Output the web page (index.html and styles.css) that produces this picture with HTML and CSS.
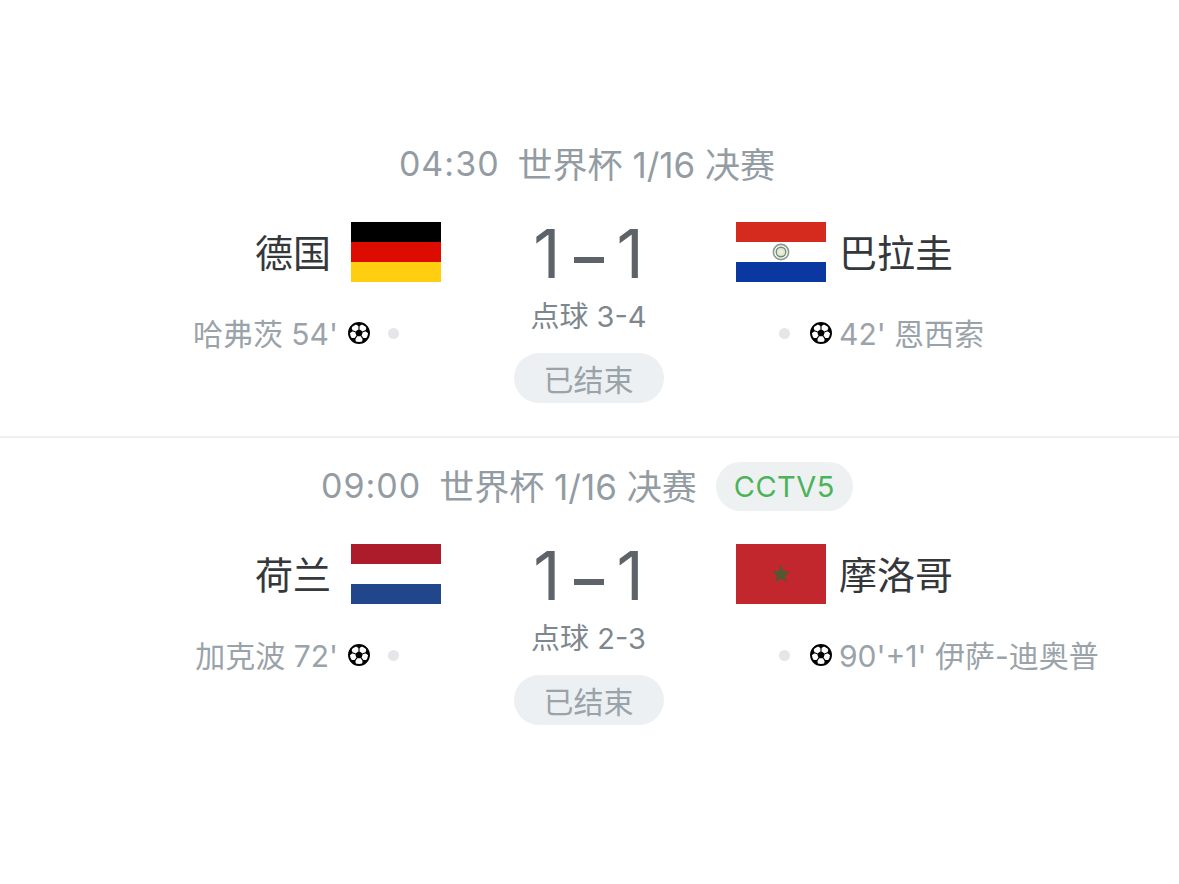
FILE: index.html
```html
<!DOCTYPE html>
<html lang="zh-CN">
<head>
<meta charset="utf-8">
<title>世界杯 1/16 决赛</title>
<link rel="stylesheet" href="styles.css">
</head>
<body>
<svg class="defs" width="0" height="0" aria-hidden="true">
  <symbol id="ball" viewBox="0 0 22 22">
    <circle cx="11" cy="11" r="10" fill="#fff" stroke="#000" stroke-width="1.9"/>
    <path d="M11 6.9 14.9 9.73 13.41 14.32H8.59L7.1 9.73Z" fill="#000"/>
    <path d="M11 7V4M14.8 9.8 17.66 8.84M13.3 14.2 15.11 16.66M8.7 14.2 6.89 16.66M7.2 9.8 4.34 8.84" stroke="#000" stroke-width="1.1" fill="none"/>
    <path d="M11 4.6 6.6 1.27H15.4Z M17.1 9 19.3 3.9 21.6 12.2Z M14.7 16.1 20.1 16.1 14 21.2Z M7.3 16.1 8 21.2 1.9 16.1Z M4.9 9 .4 12.2 2.7 3.9Z" fill="#000"/>
  </symbol>
</svg>
<main class="list">
  <section class="match match-first">
    <header class="meta">
      <span class="time">04:30</span>
      <span class="league">世界杯 1/16 决赛</span>
    </header>
    <div class="board">
      <div class="side side-home">
        <div class="team">
          <span class="name">德国</span>
          <span class="flag flag-de"><i></i><i></i><i></i></span>
        </div>
        <div class="scorer">
          <span class="scorer-text">哈弗茨 54'</span>
          <svg class="ball"><use href="#ball"/></svg>
          <span class="dot"></span>
        </div>
      </div>
      <div class="center">
        <div class="score">1<span class="dash"></span>1</div>
        <div class="penalty">点球 3-4</div>
        <div class="status">已结束</div>
      </div>
      <div class="side side-away">
        <div class="team">
          <span class="flag flag-py"><i></i><i><svg class="emblem" viewBox="0 0 18 18"><circle cx="9" cy="9" r="7.6" fill="#fff" stroke="#8f9a94" stroke-width="1.6"/><circle cx="9" cy="9" r="4.8" fill="#dfe8dc" stroke="#6f8f70" stroke-width="1.4"/><circle cx="9" cy="9" r="2" fill="#f4f0c8"/></svg></i><i></i></span>
          <span class="name">巴拉圭</span>
        </div>
        <div class="scorer">
          <span class="dot"></span>
          <svg class="ball"><use href="#ball"/></svg>
          <span class="scorer-text">42' 恩西索</span>
        </div>
      </div>
    </div>
  </section>
  <section class="match">
    <header class="meta">
      <span class="time">09:00</span>
      <span class="league">世界杯 1/16 决赛</span>
      <span class="channel">CCTV5</span>
    </header>
    <div class="board">
      <div class="side side-home">
        <div class="team">
          <span class="name">荷兰</span>
          <span class="flag flag-nl"><i></i><i></i><i></i></span>
        </div>
        <div class="scorer">
          <span class="scorer-text">加克波 72'</span>
          <svg class="ball"><use href="#ball"/></svg>
          <span class="dot"></span>
        </div>
      </div>
      <div class="center">
        <div class="score">1<span class="dash"></span>1</div>
        <div class="penalty">点球 2-3</div>
        <div class="status">已结束</div>
      </div>
      <div class="side side-away">
        <div class="team">
          <span class="flag flag-ma"><svg class="star" viewBox="0 0 20 20"><polygon points="10,1 12.4,7.2 19,7.6 13.9,11.8 15.6,18.3 10,14.7 4.4,18.3 6.1,11.8 1,7.6 7.6,7.2" fill="#4f5a33"/></svg></span>
          <span class="name">摩洛哥</span>
        </div>
        <div class="scorer">
          <span class="dot"></span>
          <svg class="ball"><use href="#ball"/></svg>
          <span class="scorer-text">90'+1' 伊萨-迪奥普</span>
        </div>
      </div>
    </div>
  </section>
</main>
</body>
</html>
```
FILE: styles.css
```css
* { box-sizing: border-box; }
html, body { margin: 0; padding: 0; }
body {
  background: #fff;
  width: 1179px;
  height: 884px;
  overflow: hidden;
  font-family: "Inter", "Noto Sans CJK SC", sans-serif;
  color: #333;
}
.defs { position: absolute; }
.list { padding-top: 139px; }
.match-first { border-bottom: 2px solid #eef0f1; height: 299px; }
.match + .match { padding-top: 23px; }
.meta {
  display: flex;
  justify-content: center;
  align-items: center;
  gap: 18px;
  height: 50px;
  padding-right: 5px;
  font-size: 34px;
  color: #939ca3;
}
.time { letter-spacing: 1px; padding-bottom: 2px; }
.league { font-size: 35px; padding-bottom: 4px; }
.channel {
  display: flex;
  align-items: center;
  height: 49px;
  margin-left: 1px;
  padding: 0 18px;
  border-radius: 25px;
  background: #eef1f2;
  color: #4cb35a;
  font-size: 29px;
  letter-spacing: 0.5px;
}
.board {
  display: grid;
  grid-template-columns: 441px 295px 1fr;
  margin-top: 33px;
}
.team {
  display: flex;
  align-items: center;
  gap: 20px;
  height: 60px;
}
.side-away .team { gap: 13px; }
.side-home .team { justify-content: flex-end; }
.name { font-size: 38px; color: #35383b; padding-bottom: 4px; }
.flag {
  display: flex;
  flex-direction: column;
  flex: none;
  width: 90px;
  height: 60px;
}
.flag i { display: flex; flex: 1; align-items: center; justify-content: center; }
.flag-de i:nth-child(1) { background: #000; }
.flag-de i:nth-child(2) { background: #dd0c00; }
.flag-de i:nth-child(3) { background: #ffce10; }
.flag-py i:nth-child(1) { background: #d52b1e; }
.flag-py i:nth-child(2) { background: #fff; }
.flag-py i:nth-child(3) { background: #0a38a0; }
.flag-nl i:nth-child(1) { background: #ad1c2b; }
.flag-nl i:nth-child(2) { background: #fff; }
.flag-nl i:nth-child(3) { background: #21468b; }
.flag-ma { background: #c1272d; align-items: center; justify-content: center; }
.emblem { width: 18px; height: 18px; }
.star { width: 20px; height: 20px; }
.scorer {
  display: flex;
  align-items: center;
  height: 40px;
  margin-top: 31px;
  font-size: 30px;
  color: #9aa3a9;
}
.scorer-text { padding-bottom: 2px; }
.side-home .scorer { justify-content: flex-end; padding-right: 42px; }
.side-away .scorer { padding-left: 43px; }
.ball { width: 22px; height: 22px; flex: none; }
.dot {
  width: 11px;
  height: 11px;
  border-radius: 50%;
  background: #e4e6e9;
  flex: none;
}
.side-home .dot { margin-left: 18px; }
.side-away .dot { margin-right: 20px; }
.side-home .ball { margin-left: 10px; }
.side-away .ball { margin-right: 7px; }
.center { display: flex; flex-direction: column; align-items: center; }
.score {
  display: flex;
  align-items: center;
  height: 64px;
  font-size: 67px;
  line-height: 64px;
  color: #5d6368;
}
.dash {
  display: block;
  width: 30px;
  height: 6px;
  margin: 11px 13px 0;
  background: #5d6368;
}
.penalty {
  margin-top: 10px;
  height: 42px;
  line-height: 42px;
  font-size: 29px;
  color: #7e878d;
}
.status {
  margin-top: 15px;
  display: flex;
  align-items: center;
  justify-content: center;
  width: 150px;
  height: 50px;
  border-radius: 25px;
  background: #edf0f2;
  font-size: 30px;
  color: #9aa3a9;
}
```
